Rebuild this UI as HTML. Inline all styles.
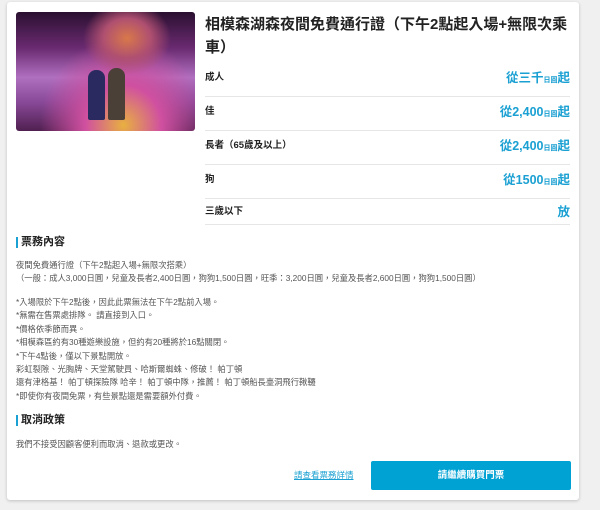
<!DOCTYPE html>
<html><head><meta charset="utf-8"><style>
*{margin:0;padding:0;box-sizing:border-box}
body{width:600px;height:510px;background:#f0f0f0;font-family:"Liberation Sans","Noto Sans CJK TC",sans-serif;position:relative;overflow:hidden}
.card{position:absolute;left:7px;top:2px;width:572px;height:498px;background:#fff;border-radius:3px;box-shadow:0 1px 3px rgba(0,0,0,.2)}
.img{position:absolute;left:16px;top:12px;width:179px;height:119px;border-radius:3px;overflow:hidden;background:radial-gradient(ellipse at 62% 22%,#d8784a 0,#b05070 15%,transparent 28%),radial-gradient(ellipse at 60% 95%,#e8b040 0,#d050a0 25%,transparent 55%),linear-gradient(180deg,#2a1030,#6a2a70 30%,#b070c0 55%,#8a4a9a 75%,#502050)}
.p1{position:absolute;left:72px;top:58px;width:17px;height:50px;background:#2a2a60;border-radius:8px 8px 2px 2px}
.p2{position:absolute;left:92px;top:56px;width:17px;height:52px;background:#4a4038;border-radius:8px 8px 2px 2px}
.title{position:absolute;left:205px;top:13px;font-size:15px;line-height:23px;color:#222;font-weight:bold;white-space:nowrap}
.row{position:absolute;left:205px;width:365px;height:34px;border-bottom:1px solid #e6e6e6}
.row .l{position:absolute;left:0;top:0;line-height:30px;font-size:9.5px;font-weight:bold;color:#222}
.row .r{position:absolute;right:0;top:0;line-height:30px;font-size:12.5px;font-weight:bold;color:#1aa0d2}
.row .r small{font-size:7px}
.h{position:absolute;left:16px;font-size:11px;font-weight:bold;color:#222;border-left:2.5px solid #1aa0d2;padding-left:3px;line-height:11px}
.t{position:absolute;left:16px;font-size:8.3px;color:#555;line-height:13.4px;white-space:nowrap}
.btn{position:absolute;left:371px;top:461px;width:200px;height:29px;background:#00a2d4;border-radius:2px;color:#fff;font-size:9.5px;font-weight:bold;text-align:center;line-height:29px}
.lnk{position:absolute;left:294px;top:469px;font-size:8.5px;color:#1aa0d2;text-decoration:underline}
</style></head><body>
<div class="card"></div>
<div class="img"><div class="p1"></div><div class="p2"></div></div>
<div class="title">相模森湖森夜間免費通行證（下午2點起入場+無限次乘<br>車）</div>
<div class="row" style="top:63px"><span class="l">成人</span><span class="r">從三千<small>日圓</small>起</span></div>
<div class="row" style="top:97px"><span class="l">佳</span><span class="r">從2,400<small>日圓</small>起</span></div>
<div class="row" style="top:131px"><span class="l">長者（65歲及以上）</span><span class="r">從2,400<small>日圓</small>起</span></div>
<div class="row" style="top:165px"><span class="l">狗</span><span class="r">從1500<small>日圓</small>起</span></div>
<div class="row" style="top:197px;height:28px"><span class="l">三歲以下</span><span class="r">放</span></div>
<div class="h" style="top:237px">票務內容</div>
<div class="t" style="top:259px">夜間免費通行證（下午2點起入場+無限次搭乘）<br>（一般：成人3,000日圓，兒童及長者2,400日圓，狗狗1,500日圓，旺季：3,200日圓，兒童及長者2,600日圓，狗狗1,500日圓）</div>
<div class="t" style="top:296px">*入場限於下午2點後，因此此票無法在下午2點前入場。<br>*無需在售票處排隊。 請直接到入口。<br>*價格依季節而異。<br>*相模森區約有30種遊樂設施，但約有20種將於16點關閉。<br>*下午4點後，僅以下景點開放。<br>彩虹裂隙、光胸牌、天堂駕駛員、哈斯爾蜘蛛、修破！ 帕丁頓<br>還有津格基！ 帕丁頓探險隊 哈辛！ 帕丁頓中隊，推薦！ 帕丁頓船長臺洞飛行鞦韆<br>*即使你有夜間免票，有些景點還是需要額外付費。</div>
<div class="h" style="top:415px">取消政策</div>
<div class="t" style="top:438px">我們不接受因顧客便利而取消、退款或更改。</div>
<div class="lnk">請查看票務詳情</div>
<div class="btn">請繼續購買門票</div>
</body></html>
